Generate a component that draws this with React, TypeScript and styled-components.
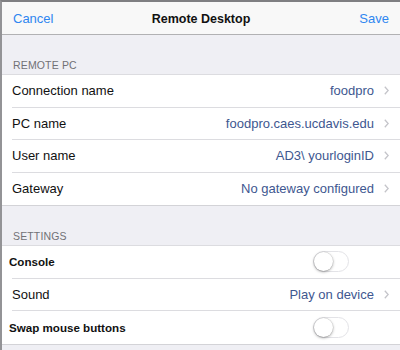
import React from "react";
import styled, { createGlobalStyle } from "styled-components";

const Global = createGlobalStyle`
  html, body { margin: 0; padding: 0; }
  body {
    width: 400px;
    height: 350px;
    overflow: hidden;
    background: #efeff4;
    font-family: "Liberation Sans", Arial, sans-serif;
    -webkit-font-smoothing: antialiased;
  }
`;

const Frame = styled.div`
  width: 400px;
  height: 350px;
  box-sizing: border-box;
  border-top: 2px solid #7f7f82;
  border-left: 2px solid #939396;
  background: #efeff4;
  overflow: hidden;
  display: flex;
  flex-direction: column;
`;

const NavBar = styled.div`
  height: 33px;
  flex: none;
  display: grid;
  grid-template-columns: 1fr auto 1fr;
  align-items: center;
  padding: 1px 11px 0 11px;
  box-sizing: border-box;
  background: #f8f8f8;
  border-bottom: 1px solid #b1b1b3;
`;

const NavButton = styled.span<{ $align: "left" | "right" }>`
  color: #2f86f0;
  font-size: 13px;
  justify-self: ${(p) => (p.$align === "left" ? "start" : "end")};
`;

const NavTitle = styled.span`
  color: #111;
  font-size: 12.5px;
  font-weight: bold;
`;

const SectionHeader = styled.div`
  height: 39px;
  flex: none;
  display: flex;
  align-items: flex-end;
  padding: 0 0 3px 11px;
  box-sizing: border-box;
  color: #717176;
  font-size: 10.5px;
  letter-spacing: 0.15px;
`;

const Group = styled.div`
  flex: none;
  background: #fff;
  border-top: 1px solid #dcdce0;
  border-bottom: 1px solid #d3d3d7;
`;

const Row = styled.div`
  height: 32.5px;
  padding-left: 10px;
  display: flex;
  box-sizing: border-box;
  &:last-child > div {
    border-bottom: none;
  }
`;

const RowBody = styled.div<{ $rightPad: number }>`
  flex: 1;
  display: flex;
  align-items: center;
  padding-right: ${(p) => p.$rightPad}px;
  border-bottom: 1px solid #dcdce0;
`;

const Label = styled.span<{ $bold?: boolean }>`
  flex: 1;
  color: #111;
  font-size: ${(p) => (p.$bold ? "11.6px" : "13px")};
  font-weight: ${(p) => (p.$bold ? "bold" : "normal")};
  margin-left: ${(p) => (p.$bold ? "-3px" : "0")};
`;

const Value = styled.span`
  color: #3e5790;
  font-size: 13px;
  margin-right: 10px;
`;

const Chevron = styled.svg`
  width: 5px;
  height: 9px;
  flex: none;
`;

const Toggle = styled.div`
  width: 36px;
  height: 21px;
  box-sizing: border-box;
  border-radius: 11px;
  border: 1px solid #e3e3e7;
  background: #fff;
  position: relative;
  flex: none;
`;

const Knob = styled.div`
  position: absolute;
  left: 0;
  top: 0;
  width: 19px;
  height: 19px;
  border-radius: 50%;
  background: #fff;
  box-shadow: 0 1px 3px rgba(0, 0, 0, 0.35), 0 0 0 0.5px rgba(0, 0, 0, 0.12);
`;

const ChevronIcon = () => (
  <Chevron viewBox="0 0 5 9">
    <path d="M0.8 0.8 L4.2 4.5 L0.8 8.2" fill="none" stroke="#c4c4c9" strokeWidth="1.3" />
  </Chevron>
);

type Item =
  | { kind: "link"; label: string; value: string }
  | { kind: "toggle"; label: string };

const remote: Item[] = [
  { kind: "link", label: "Connection name", value: "foodpro" },
  { kind: "link", label: "PC name", value: "foodpro.caes.ucdavis.edu" },
  { kind: "link", label: "User name", value: "AD3\\ yourloginID" },
  { kind: "link", label: "Gateway", value: "No gateway configured" },
];

const settings: Item[] = [
  { kind: "toggle", label: "Console" },
  { kind: "link", label: "Sound", value: "Play on device" },
  { kind: "toggle", label: "Swap mouse buttons" },
];

const renderRow = (item: Item) => (
  <Row key={item.label}>
    {item.kind === "link" ? (
      <RowBody $rightPad={11}>
        <Label>{item.label}</Label>
        <Value>{item.value}</Value>
        <ChevronIcon />
      </RowBody>
    ) : (
      <RowBody $rightPad={51}>
        <Label $bold>{item.label}</Label>
        <Toggle>
          <Knob />
        </Toggle>
      </RowBody>
    )}
  </Row>
);

export default function App() {
  return (
    <>
      <Global />
      <Frame>
        <NavBar>
          <NavButton $align="left">Cancel</NavButton>
          <NavTitle>Remote Desktop</NavTitle>
          <NavButton $align="right">Save</NavButton>
        </NavBar>
        <SectionHeader>REMOTE PC</SectionHeader>
        <Group>{remote.map(renderRow)}</Group>
        <SectionHeader>SETTINGS</SectionHeader>
        <Group>{settings.map(renderRow)}</Group>
      </Frame>
    </>
  );
}
